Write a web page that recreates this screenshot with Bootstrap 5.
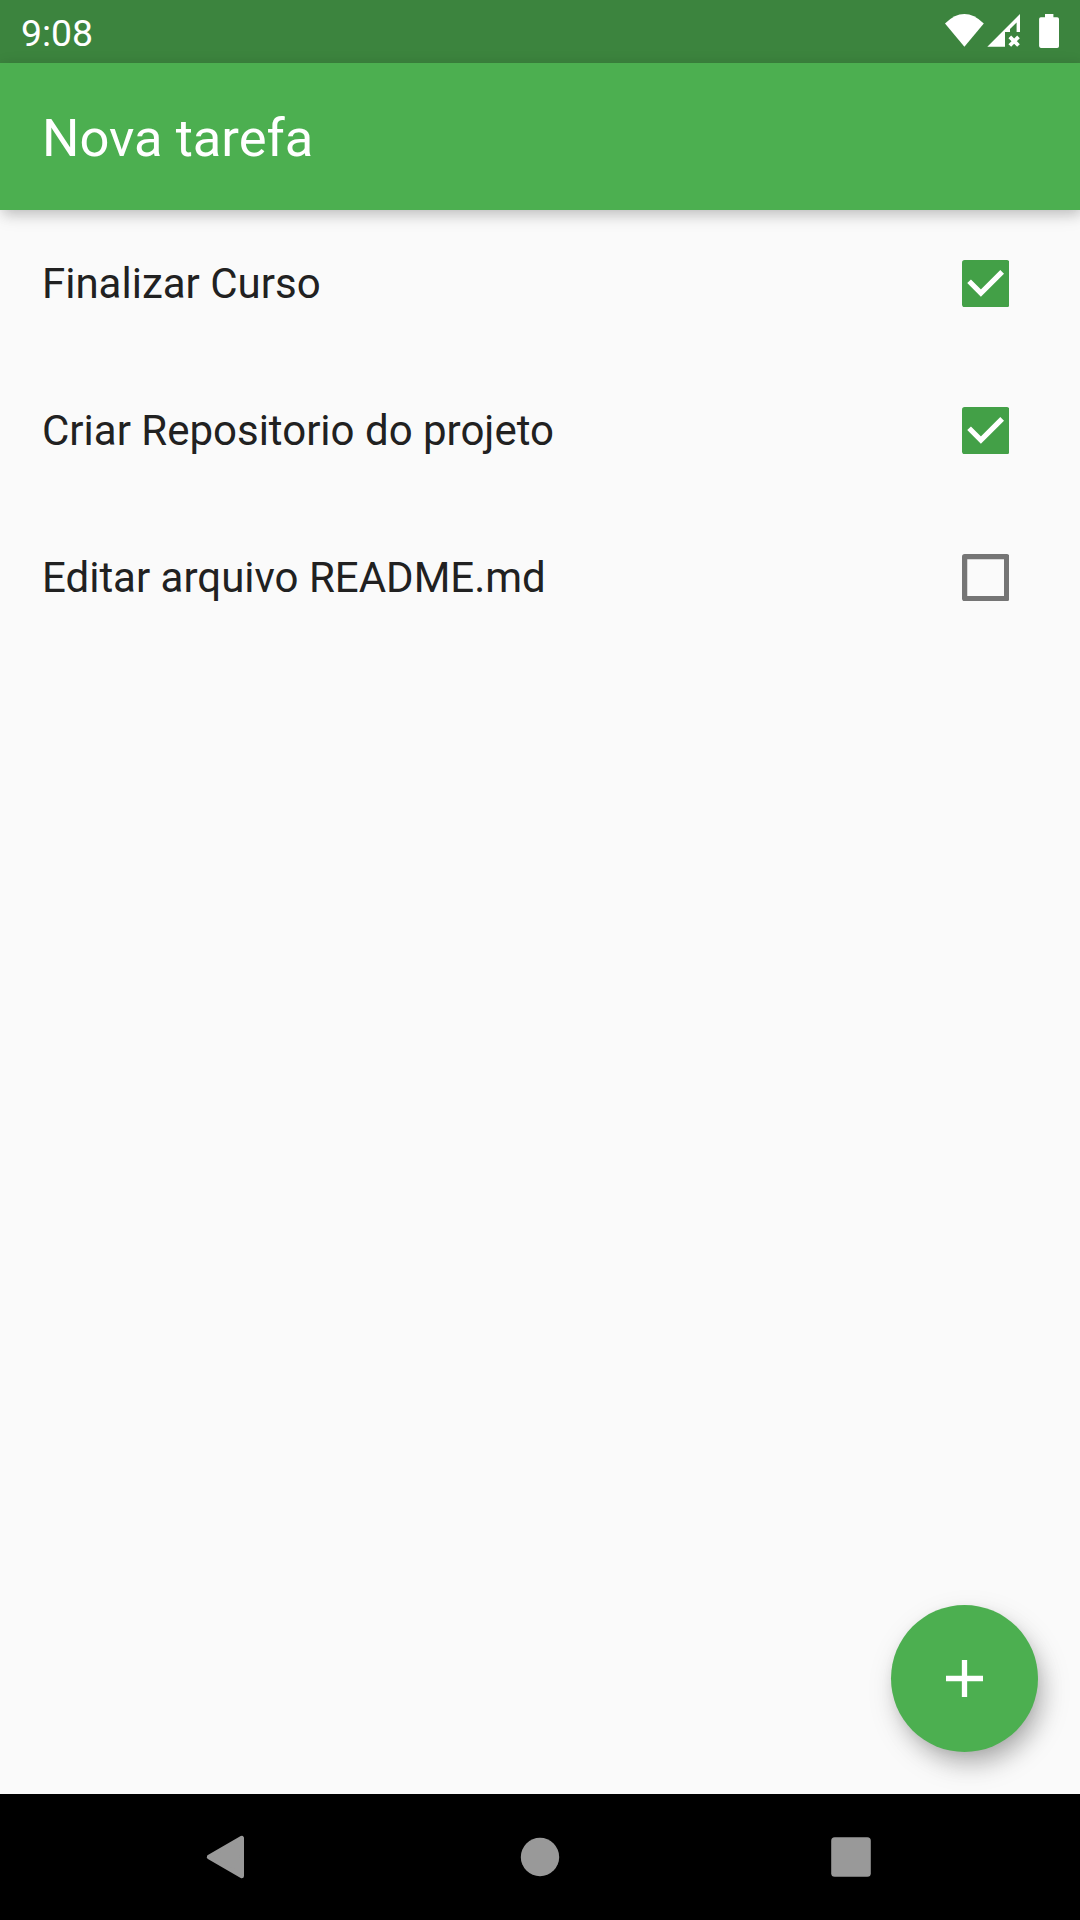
<!DOCTYPE html>
<html lang="pt-BR">
<head>
<meta charset="utf-8">
<meta name="viewport" content="width=device-width, initial-scale=1">
<title>Nova tarefa</title>
<link href="https://cdn.jsdelivr.net/npm/bootstrap@5.3.0/dist/css/bootstrap.min.css" rel="stylesheet">
<style>
  body { font-family: Roboto, "Noto Sans", sans-serif; background: #fafafa; color: #212121; }
  .app-screen { height: 1920px; }
  .status-bar { height: 63px; background: #3c843e; padding: 0 21px; }
  .clock { font-size: 37.4px; line-height: 43px; padding-top: 3px; }
  .app-bar { height: 147px; background: #4caf50; padding: 0 42px; z-index: 2;
    box-shadow: 3px 5px 12px -1px rgba(0,0,0,.16), 0 5px 18px rgba(0,0,0,.11); }
  .app-title { font-size: 52.5px; line-height: 62px; padding-top: 3px; }
  .task-item { height: 147px; padding: 0 71px 0 42px; }
  .task-name { font-size: 42px; line-height: 50px; }
  .task-check { width: 47.25px; height: 47.25px; }
  .fab { right: 42px; bottom: 42px; width: 147px; height: 147px; background: #4caf50;
    box-shadow: 6px 13px 22px -3px rgba(0,0,0,.22), 5px 12px 32px rgba(0,0,0,.12), 0 2px 10px rgba(0,0,0,.04); }
  .nav-keys { height: 126px; background: #000; }
</style>
</head>
<body>
<div class="app-screen d-flex flex-column overflow-hidden">
  <div class="status-bar d-flex justify-content-between align-items-center text-white flex-shrink-0">
    <span class="clock">9:08</span>
    <svg width="115" height="63" viewBox="944 0 115 63" fill="#fff" aria-hidden="true">
      <path d="M945 23.5Q964.3 4.6 983.8 23.5L964.4 46.7Z"/>
      <path d="M987.3 46.8L1020 14.1V32H1016.6V22.4L1010 29V32H1005V46.8Z"/>
      <path d="M1009.8 36.8L1018.5 45.5M1018.5 36.8L1009.8 45.5" stroke="#fff" stroke-width="3.8"/>
      <path d="M1045 14h8.4v3.3h3.8q1.8 0 1.8 1.8v27q0 1.8-1.8 1.8h-16.3q-1.8 0-1.8-1.8v-27q0-1.8 1.8-1.8h4.1z"/>
    </svg>
  </div>
  <header class="app-bar d-flex align-items-center text-white flex-shrink-0 position-relative">
    <h1 class="app-title fw-normal mb-0">Nova tarefa</h1>
  </header>
  <main class="flex-grow-1 position-relative">
    <ul class="list-unstyled mb-0">
      <li class="task-item d-flex align-items-center justify-content-between">
        <span class="task-name">Finalizar Curso</span>
        <svg class="task-check" viewBox="0 0 47.25 47.25" role="img" aria-label="Concluída"><rect width="47.25" height="47.25" rx="2.7" fill="#43a047"/><path d="M7.09 21.26L18.9 33.08L40.16 11.81" fill="none" stroke="#fff" stroke-width="5.25"/></svg>
      </li>
      <li class="task-item d-flex align-items-center justify-content-between">
        <span class="task-name">Criar Repositorio do projeto</span>
        <svg class="task-check" viewBox="0 0 47.25 47.25" role="img" aria-label="Concluída"><rect width="47.25" height="47.25" rx="2.7" fill="#43a047"/><path d="M7.09 21.26L18.9 33.08L40.16 11.81" fill="none" stroke="#fff" stroke-width="5.25"/></svg>
      </li>
      <li class="task-item d-flex align-items-center justify-content-between">
        <span class="task-name">Editar arquivo README.md</span>
        <svg class="task-check" viewBox="0 0 47.25 47.25" role="img" aria-label="Pendente"><path fill="#757575" fill-rule="evenodd" d="M2.7 0H44.55Q47.25 0 47.25 2.7V44.55Q47.25 47.25 44.55 47.25H2.7Q0 47.25 0 44.55V2.7Q0 0 2.7 0ZM5.25 5.25V42H42V5.25Z"/></svg>
      </li>
    </ul>
    <button class="fab btn rounded-circle border-0 p-0 position-absolute d-flex align-items-center justify-content-center" aria-label="Adicionar">
      <svg width="37" height="37" viewBox="0 0 37 37" fill="none" stroke="#fff" stroke-width="5.3"><path d="M18.5 0v37M0 18.5h37"/></svg>
    </button>
  </main>
  <nav class="nav-keys flex-shrink-0">
    <svg class="d-block" width="1080" height="126" viewBox="0 0 1080 126" fill="#999" aria-hidden="true">
      <path d="M209 63L241.8 44V82Z" stroke="#999" stroke-width="4.4" stroke-linejoin="round"/>
      <circle cx="540" cy="63" r="19.2"/>
      <rect x="831.2" y="43.2" width="39.6" height="39.6" rx="3.5"/>
    </svg>
  </nav>
</div>
<script src="https://cdn.jsdelivr.net/npm/bootstrap@5.3.0/dist/js/bootstrap.bundle.min.js"></script>
</body>
</html>
